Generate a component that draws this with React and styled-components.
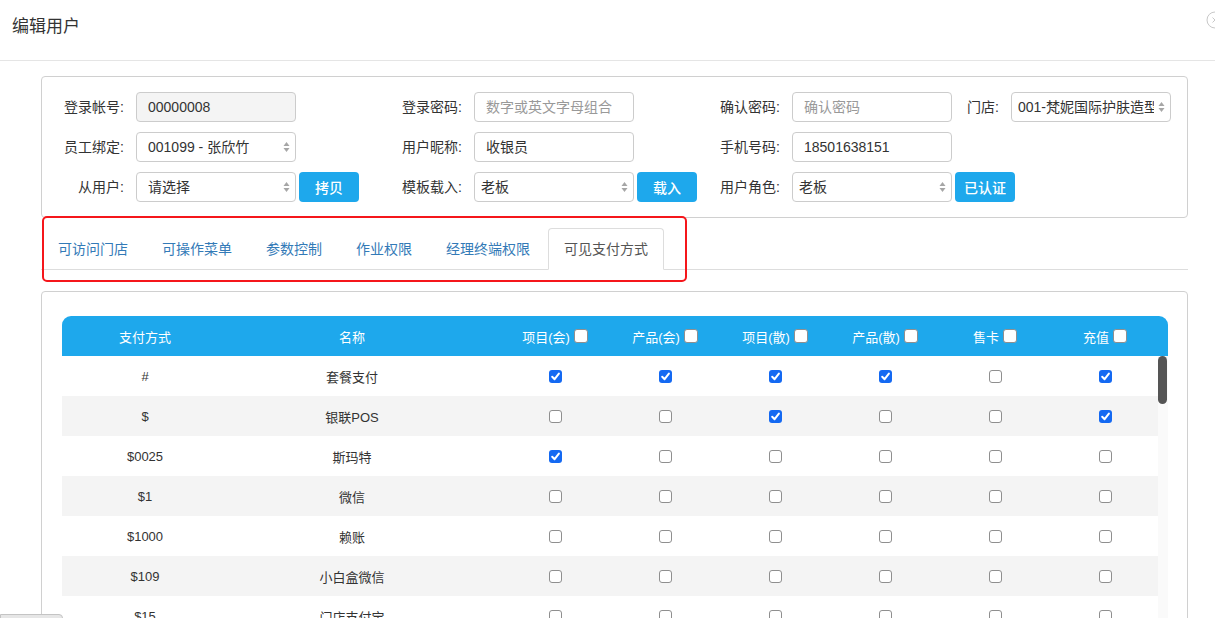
import React from "react";
import styled, { createGlobalStyle } from "styled-components";

const GlobalStyle = createGlobalStyle`
  html, body {
    margin: 0;
    padding: 0;
    overflow: hidden;
    background: #fff;
  }
  body {
    font-family: "Liberation Sans", "Noto Sans CJK SC", sans-serif;
    color: #333;
  }
  * {
    box-sizing: border-box;
  }
`;

const payments = [
  { code: "#", name: "套餐支付", checks: [1, 1, 1, 1, 0, 1] },
  { code: "$", name: "银联POS", checks: [0, 0, 1, 0, 0, 1] },
  { code: "$0025", name: "斯玛特", checks: [1, 0, 0, 0, 0, 0] },
  { code: "$1", name: "微信", checks: [0, 0, 0, 0, 0, 0] },
  { code: "$1000", name: "赖账", checks: [0, 0, 0, 0, 0, 0] },
  { code: "$109", name: "小白盒微信", checks: [0, 0, 0, 0, 0, 0] },
  { code: "$15", name: "门店支付宝", checks: [0, 0, 0, 0, 0, 0] },
  { code: "$2", name: "支付宝", checks: [0, 0, 0, 0, 0, 0] },
];

const checkColumns = ["项目(会)", "产品(会)", "项目(散)", "产品(散)", "售卡", "充值"];
const tabs = ["可访问门店", "可操作菜单", "参数控制", "作业权限", "经理终端权限", "可见支付方式"];

const Arrows = () => (
  <ArrowIcon width="7" height="12" viewBox="0 0 7 12">
    <path d="M0.5 5 L3.5 1 L6.5 5 Z" fill="#a6a6a6" />
    <path d="M0.5 7 L3.5 11 L6.5 7 Z" fill="#a6a6a6" />
  </ArrowIcon>
);

const Check = ({ checked, head }) => (
  <Box $checked={checked} $head={head}>
    {checked ? (
      <svg width="13" height="13" viewBox="0 0 13 13">
        <path d="M3.2 6.8 L5.6 9.2 L9.9 3.6" stroke="#fff" strokeWidth="2" fill="none" strokeLinecap="round" strokeLinejoin="round" />
      </svg>
    ) : null}
  </Box>
);

const Field = ({ label, labelWidth, width, children }) => (
  <FieldWrap $width={width}>
    <Label $w={labelWidth}>{label}</Label>
    {children}
  </FieldWrap>
);

export default function App() {
  return (
    <Modal>
      <GlobalStyle />
      <Header>
        <Title>编辑用户</Title>
        <CloseIcon width="18" height="18" viewBox="0 0 18 18">
          <circle cx="9" cy="9" r="8" stroke="#c8c8c8" strokeWidth="1" fill="#fff" />
          <path d="M6.5 6.5 L11.5 11.5 M11.5 6.5 L6.5 11.5" stroke="#c8c8c8" strokeWidth="1" />
        </CloseIcon>
      </Header>

      <Content>
        <FormPanel>
          <FormRow>
            <Field label="登录帐号:" labelWidth={74} width={338}>
              <Input $readonly>00000008</Input>
            </Field>
            <Field label="登录密码:" labelWidth={74} width={318}>
              <Input $placeholder>数字或英文字母组合</Input>
            </Field>
            <Field label="确认密码:" labelWidth={74}>
              <Input $placeholder>确认密码</Input>
            </Field>
            <Field label="门店:" labelWidth={47}>
              <Select $pad={6}>
                <SelectText>001-梵妮国际护肤造型</SelectText>
                <Arrows />
              </Select>
            </Field>
          </FormRow>
          <FormRow>
            <Field label="员工绑定:" labelWidth={74} width={338}>
              <Select $pad={11}>
                <SelectText>001099 - 张欣竹</SelectText>
                <Arrows />
              </Select>
            </Field>
            <Field label="用户昵称:" labelWidth={74} width={318}>
              <Input>收银员</Input>
            </Field>
            <Field label="手机号码:" labelWidth={74}>
              <Input>18501638151</Input>
            </Field>
          </FormRow>
          <FormRow>
            <Field label="从用户:" labelWidth={74} width={338}>
              <Select $pad={11}>
                <SelectText>请选择</SelectText>
                <Arrows />
              </Select>
              <Button>拷贝</Button>
            </Field>
            <Field label="模板载入:" labelWidth={74} width={318}>
              <Select $pad={6}>
                <SelectText>老板</SelectText>
                <Arrows />
              </Select>
              <Button>载入</Button>
            </Field>
            <Field label="用户角色:" labelWidth={74}>
              <Select $pad={6}>
                <SelectText>老板</SelectText>
                <Arrows />
              </Select>
              <Button>已认证</Button>
            </Field>
          </FormRow>
        </FormPanel>

        <TabsWrap>
          <TabList>
            {tabs.map((t, i) => (
              <Tab key={t} $active={i === tabs.length - 1}>
                {t}
              </Tab>
            ))}
          </TabList>
          <Highlight />
        </TabsWrap>

        <TablePanel>
          <Table>
            <HeadRow>
              <HeadCell>支付方式</HeadCell>
              <HeadCell $name>名称</HeadCell>
              {checkColumns.map((c) => (
                <HeadCell key={c}>
                  {c}
                  <Check head />
                </HeadCell>
              ))}
            </HeadRow>
            <TableBody>
              {payments.map((p, i) => (
                <Row key={p.code} $striped={i % 2 === 1}>
                  <Cell>{p.code}</Cell>
                  <Cell $name>{p.name}</Cell>
                  {p.checks.map((c, j) => (
                    <Cell key={j}>
                      <Check checked={!!c} />
                    </Cell>
                  ))}
                </Row>
              ))}
              <ScrollTrack>
                <ScrollThumb />
              </ScrollTrack>
            </TableBody>
          </Table>
        </TablePanel>
      </Content>
      <CornerBar />
    </Modal>
  );
}

const Modal = styled.div`
  position: relative;
  width: 1215px;
  height: 618px;
  overflow: hidden;
  background: #fff;
`;

const Header = styled.div`
  position: relative;
  height: 61px;
  border-bottom: 1px solid #e5e5e5;
  padding: 15px 12px 0;
`;

const Title = styled.h4`
  margin: 0;
  font-size: 17px;
  font-weight: normal;
  line-height: 24px;
  color: #333;
`;

const CloseIcon = styled.svg`
  position: absolute;
  top: 11px;
  right: -9px;
`;

const Content = styled.div`
  padding: 15px 27px 0 41px;
`;

const FormPanel = styled.div`
  border: 1px solid #d0d0d0;
  border-radius: 4px;
  padding: 15px 0 5px 8px;
`;

const FormRow = styled.div`
  display: flex;
  align-items: center;
  height: 30px;
  margin-bottom: 10px;
`;

const FieldWrap = styled.div`
  display: flex;
  align-items: center;
  flex: none;
  width: ${(p) => (p.$width ? `${p.$width}px` : "auto")};
`;

const Label = styled.span`
  width: ${(p) => p.$w}px;
  margin-right: 12px;
  text-align: right;
  font-size: 14px;
  line-height: 20px;
  color: #333;
  white-space: nowrap;
`;

const Input = styled.div`
  width: 160px;
  height: 30px;
  line-height: 28px;
  padding: 0 11px;
  border: 1px solid #ccc;
  border-radius: 4px;
  font-size: 14px;
  background: ${(p) => (p.$readonly ? "#f4f4f4" : "#fff")};
  color: ${(p) => (p.$placeholder ? "#999" : "#333")};
  white-space: nowrap;
  overflow: hidden;
`;

const Select = styled.div`
  position: relative;
  width: 160px;
  height: 30px;
  line-height: 28px;
  padding: 0 16px 0 ${(p) => p.$pad}px;
  border: 1px solid #ccc;
  border-radius: 4px;
  font-size: 14px;
  background: #fff;
  color: #333;
`;

const SelectText = styled.div`
  white-space: nowrap;
  overflow: hidden;
`;

const ArrowIcon = styled.svg`
  position: absolute;
  right: 5px;
  top: 8px;
`;

const Button = styled.button`
  width: 60px;
  height: 30px;
  margin-left: 3px;
  border: none;
  border-radius: 4px;
  background: #1ea8ec;
  color: #fff;
  font-family: inherit;
  font-size: 14px;
  font-weight: 500;
  padding: 0;
`;

const TabsWrap = styled.div`
  position: relative;
  margin-top: 10px;
`;

const TabList = styled.div`
  display: flex;
  height: 42px;
  padding-left: 1px;
  border-bottom: 1px solid #ddd;
`;

const Tab = styled.div`
  padding: 10px 15px;
  margin-right: 2px;
  line-height: 20px;
  font-size: 14px;
  height: 42px;
  border: 1px solid ${(p) => (p.$active ? "#ddd" : "transparent")};
  border-bottom-color: ${(p) => (p.$active ? "#fff" : "transparent")};
  border-radius: 4px 4px 0 0;
  background: ${(p) => (p.$active ? "#fff" : "transparent")};
  color: ${(p) => (p.$active ? "#555" : "#337ab7")};
  white-space: nowrap;
`;

const Highlight = styled.div`
  position: absolute;
  left: 1px;
  top: -12px;
  width: 645px;
  height: 66px;
  border: 2.5px solid #f5161b;
  border-radius: 5px;
  pointer-events: none;
`;

const TablePanel = styled.div`
  margin-top: 21px;
  height: 400px;
  border: 1px solid #d0d0d0;
  border-radius: 4px;
  padding: 24px 19px 0 20px;
`;

const Table = styled.div`
  font-size: 13px;
`;

const HeadRow = styled.div`
  display: grid;
  grid-template-columns: 166px 272px repeat(6, 110px);
  height: 40px;
  background: #1ea8ec;
  border-radius: 9px 9px 0 0;
  color: #fff;
`;

const HeadCell = styled.div`
  display: flex;
  align-items: center;
  justify-content: center;
  gap: 4px;
  padding-right: ${(p) => (p.$name ? "24px" : "0")};
`;

const TableBody = styled.div`
  position: relative;
  padding-right: 10px;
`;

const Row = styled.div`
  display: grid;
  grid-template-columns: 166px 272px repeat(6, 110px);
  height: 40px;
  background: ${(p) => (p.$striped ? "#f4f4f4" : "#fff")};
`;

const Cell = styled.div`
  display: flex;
  align-items: center;
  justify-content: center;
  color: #333;
  padding-right: ${(p) => (p.$name ? "24px" : "0")};
`;

const Box = styled.span`
  display: inline-block;
  flex: none;
  width: ${(p) => (p.$head ? 14 : 13)}px;
  height: ${(p) => (p.$head ? 14 : 13)}px;
  border-radius: 3px;
  border: ${(p) => (p.$checked ? "none" : "1px solid #8f8f8f")};
  background: ${(p) => (p.$checked ? "#1469f2" : "#fff")};
  line-height: 0;
`;

const ScrollTrack = styled.div`
  position: absolute;
  top: 0;
  right: 0;
  bottom: 0;
  width: 10px;
  background: #fafafa;
`;

const ScrollThumb = styled.div`
  width: 9px;
  height: 48px;
  border-radius: 5px;
  background: #555;
`;

const CornerBar = styled.div`
  position: absolute;
  left: 0;
  bottom: -4px;
  width: 63px;
  height: 8px;
  border: 1px solid #c4c4c4;
  border-radius: 0 4px 0 0;
  background: #e6e6e6;
`;
